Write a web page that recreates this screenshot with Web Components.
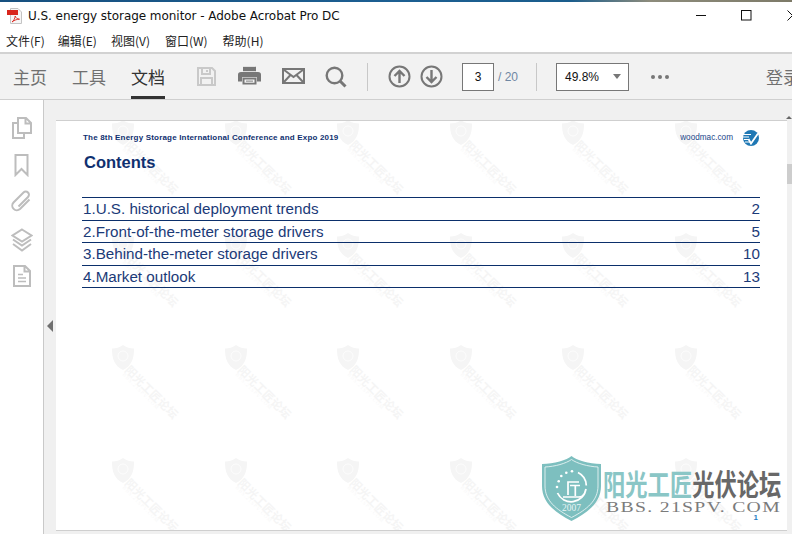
<!DOCTYPE html>
<html>
<head>
<meta charset="utf-8">
<title>U.S. energy storage monitor</title>
<style>
  html, body { margin: 0; height: 100%; overflow: hidden; background: #fff; }
  body { font-family: "Noto Sans", "Noto Sans CJK SC", sans-serif; }
  acro-app { height: 534px; }
</style>
</head>
<body>
<acro-app>
  <title-bar>U.S. energy storage monitor - Adobe Acrobat Pro DC</title-bar>
  <menu-bar></menu-bar>
  <tool-bar></tool-bar>
  <doc-view>
    <side-rail slot="rail"></side-rail>
    <pdf-page>
      <span slot="conf">The 8th Energy Storage International Conference and Expo 2019</span>
      <span slot="site">woodmac.com</span>
      <span slot="heading">Contents</span>
      <toc-row page="2">1.U.S. historical deployment trends</toc-row>
      <toc-row page="5">2.Front-of-the-meter storage drivers</toc-row>
      <toc-row page="10">3.Behind-the-meter storage drivers</toc-row>
      <toc-row page="13">4.Market outlook</toc-row>
    </pdf-page>
  </doc-view>
</acro-app>

<script>
const CJK = '"Noto Sans CJK SC", "Noto Sans", sans-serif';

class AcroApp extends HTMLElement {
  constructor() {
    super();
    this.attachShadow({ mode: 'open' }).innerHTML = `
      <style>
        :host { display: flex; flex-direction: column; width: 792px; overflow: hidden; }
        .strip { height: 2px; background: linear-gradient(90deg, #17507f 0, #1c5f92 50%, #1a5d8c 72%, #8d8c7c 82%, #7d7a68 100%); flex: none; }
      </style>
      <div class="strip"></div>
      <slot></slot>`;
  }
}

class TitleBar extends HTMLElement {
  constructor() {
    super();
    this.attachShadow({ mode: 'open' }).innerHTML = `
      <style>
        :host { display: flex; align-items: center; box-sizing: border-box; height: 25px; flex: none; padding: 2px 0 0 7px; background: #fff; color: #111; font: 12px "DejaVu Sans", sans-serif; }
        .doc { margin-right: 6px; flex: none; }
        .name { flex: 1; white-space: nowrap; letter-spacing: -.05px; }
        .btns { display: flex; align-items: center; width: 103px; flex: none; height: 100%; overflow: hidden; }
        .btns svg { flex: none; display: block; }
      </style>
      <svg class="doc" width="15" height="16" viewBox="0 0 15 16">
        <path d="M3.500.5H11L14.500 4v11.500h-11z" fill="#f6f6f6" stroke="#c4c4c4"/>
        <rect x="0" y="2" width="11" height="5" fill="#d9251c"/>
        <path d="M5 14c1.500-1 3-3.500 3.200-6 .6 2 2 3 4.300 3.200-2.300 0-5 .8-7.500 2.800z" fill="none" stroke="#d9251c" stroke-width=".9"/>
      </svg>
      <span class="name"><slot></slot></span>
      <div class="btns">
        <svg width="11" height="11" viewBox="0 0 11 11" style="margin-left:7px"><path d="M0 5.500h10" stroke="#111"/></svg>
        <svg width="11" height="11" viewBox="0 0 11 11" style="margin-left:34px"><rect x=".5" y=".5" width="9.500" height="9.500" fill="none" stroke="#111"/></svg>
        <svg width="11" height="11" viewBox="0 0 11 11" style="margin-left:35px"><path d="M.5.5l10 10M10.500.5l-10 10" stroke="#111" fill="none"/></svg>
      </div>`;
  }
}

class MenuBar extends HTMLElement {
  constructor() {
    super();
    const items = [['文件(F)', 0], ['编辑(E)', 13], ['视图(V)', 14], ['窗口(W)', 15], ['帮助(H)', 15]];
    const spans = items.map((it) => `<span style="margin-left:${it[1]}px">${it[0]}</span>`).join('');
    this.attachShadow({ mode: 'open' }).innerHTML = `
      <style>
        :host { display: flex; align-items: center; box-sizing: border-box; height: 25px; flex: none; padding: 2px 0 0 6px; background: #fff; color: #222; font: 12px ${CJK}; }
        span { white-space: nowrap; }
      </style>
      ${spans}`;
  }
}

class ToolBar extends HTMLElement {
  constructor() {
    super();
    this.attachShadow({ mode: 'open' }).innerHTML = `
      <style>
        :host { display: flex; align-items: center; height: 45px; flex: none; background: #f2f2f2; border-top: 2px solid #d2d2d2; border-bottom: 1px solid #cfcfcf; font-family: ${CJK}; color: #707070; overflow: hidden; }
        .tab { position: relative; font-size: 17px; line-height: 45px; height: 45px; width: 34px; flex: none; white-space: nowrap; }
        .tab.on { color: #333; }
        .tab.on::after { content: ""; position: absolute; left: 0; right: 0; bottom: 0; height: 3px; background: #333; }
        svg { display: block; flex: none; }
        .sep { width: 1px; height: 28px; background: #c8c8c8; flex: none; }
        .box { box-sizing: border-box; height: 28px; border: 1px solid #777; background: #fff; color: #111; font: 12px "Liberation Sans", sans-serif; display: flex; align-items: center; flex: none; }
        .page { width: 32px; justify-content: center; }
        .count { margin-left: 4px; font: 12px "Liberation Sans", sans-serif; color: #6f87a3; white-space: nowrap; width: 21px; flex: none; }
        .zoom { width: 73px; padding-left: 8px; justify-content: space-between; padding-right: 7px; }
        .zoom i { width: 0; height: 0; border: 4px solid transparent; border-top: 5px solid #777; border-bottom: 0; }
        .dot { width: 4px; height: 4px; border-radius: 50%; background: #777; margin-right: 3px; flex: none; }
        .login { margin-left: 94px; font-size: 17px; white-space: nowrap; flex: none; }
      </style>
      <span class="tab" style="margin-left:13px">主页</span>
      <span class="tab" style="margin-left:25px">工具</span>
      <span class="tab on" style="margin-left:25px">文档</span>
      <svg style="margin-left:31px" width="21" height="21" viewBox="0 0 21 21" fill="none" stroke="#c9c9c9" stroke-width="2">
        <path d="M2 2h14l3 3v14H2z"/><path d="M6 2v6h8V2M11 4v2M5 19v-7h11v7"/>
      </svg>
      <svg style="margin:0 0 3px 21px" width="23" height="19" viewBox="0 0 23 22" preserveAspectRatio="none" fill="#777">
        <path d="M5 1h13v5H5z"/><path d="M3 7h17a3 3 0 0 1 3 3v8h-4v-5H4v5H0v-8a3 3 0 0 1 3-3z"/>
        <path d="M5.500 14.500h12v6h-12z" fill="#f2f2f2" stroke="#777" stroke-width="2"/><path d="M8 17.500h7" stroke="#777"/>
      </svg>
      <svg style="margin:0 0 1px 21px" width="23" height="16" viewBox="0 0 23 16" fill="none" stroke="#777" stroke-width="2">
        <rect x="1" y="1" width="21" height="14"/><path d="M1.500 1.500L11.500 9l10-7.500M1.500 14.500L8.500 7M21.500 14.500L14.500 7"/>
      </svg>
      <svg style="margin-left:20px" width="22" height="22" viewBox="0 0 22 22" fill="none" stroke="#777">
        <circle cx="9.500" cy="9.500" r="7.800" stroke-width="2.400"/><path d="M15 15l5.500 5.500" stroke-width="3"/>
      </svg>
      <div class="sep" style="margin-left:20px"></div>
      <svg style="margin-left:20px" width="23" height="23" viewBox="0 0 23 23" fill="none" stroke="#777" stroke-width="2">
        <circle cx="11.500" cy="11.500" r="10"/><path d="M11.500 18V6M6.500 11l5-5 5 5" stroke-width="2.400"/>
      </svg>
      <svg style="margin-left:9px" width="23" height="23" viewBox="0 0 23 23" fill="none" stroke="#777" stroke-width="2">
        <circle cx="11.500" cy="11.500" r="10"/><path d="M11.500 5v12M6.500 12l5 5 5-5" stroke-width="2.400"/>
      </svg>
      <div class="box page" style="margin-left:19px">3</div>
      <span class="count">/ 20</span>
      <div class="sep" style="margin-left:17px"></div>
      <div class="box zoom" style="margin-left:19px"><span>49.8%</span><i></i></div>
      <span class="dot" style="margin-left:22px"></span><span class="dot"></span><span class="dot"></span>
      <span class="login">登录</span>`;
  }
}

class DocView extends HTMLElement {
  constructor() {
    super();
    this.attachShadow({ mode: 'open' }).innerHTML = `
      <style>
        :host { display: flex; flex: 1; min-height: 0; background: #f0f0f0; position: relative; }
        .main { flex: 1; display: flex; padding: 20px 0 3px 12px; min-width: 0; }
        .bar { width: 5px; flex: none; position: relative; }
        .thumb { position: absolute; top: 64px; left: 0; right: 0; height: 20px; background: #cdcdcd; }
        .up { position: absolute; top: 16px; right: 0; width: 0; height: 0; border: 3px solid transparent; border-bottom: 3px solid #666; border-top: 0; }
        .handle { position: absolute; left: 47px; top: 220px; width: 0; height: 0; border: 6px solid transparent; border-right: 6px solid #707070; border-left: 0; }
      </style>
      <slot name="rail"></slot>
      <div class="main"><slot></slot></div>
      <div class="bar"><div class="up"></div><div class="thumb"></div></div>
      <div class="handle"></div>`;
  }
}

class SideRail extends HTMLElement {
  constructor() {
    super();
    this.attachShadow({ mode: 'open' }).innerHTML = `
      <style>
        :host { display: flex; flex-direction: column; align-items: center; box-sizing: border-box; width: 44px; flex: none; background: #fff; border-right: 1px solid #c9c9c9; padding-top: 17px; }
        svg { display: block; flex: none; }
      </style>
      <svg width="20" height="22" viewBox="0 0 20 22" fill="none" stroke="#bdbdbd" stroke-width="2" style="margin-left:1px">
        <path d="M6 16V1h8l5 5v10zM13.500 1v5.500H19"/><path d="M6 6H1v15h11v-5"/>
      </svg>
      <svg style="margin-top:15px" width="15" height="23" viewBox="0 0 15 23" fill="none" stroke="#bdbdbd" stroke-width="2">
        <path d="M1.500 1h12v20l-6-6-6 6z"/>
      </svg>
      <svg style="margin-top:13px" width="21" height="22" viewBox="0 0 21 22" fill="none" stroke="#bdbdbd" stroke-width="2">
        <path d="M18.500 9.500L9 19a4.600 4.600 0 0 1-6.500-6.500L12.500 2.500a3.100 3.100 0 0 1 4.500 4.500L7.500 16.500"/>
      </svg>
      <svg style="margin-top:16px" width="22" height="24" viewBox="0 0 22 24" fill="none" stroke="#bdbdbd" stroke-width="2">
        <path d="M11 1.500l9.500 6-9.500 6-9.500-6z"/><path d="M2 11.500l9 6 9-6M2 16l9 6.500 9-6.500"/>
      </svg>
      <svg style="margin-top:13px" width="18" height="22" viewBox="0 0 18 22" fill="none" stroke="#bdbdbd" stroke-width="2">
        <path d="M1 1h11l5 5v15H1zM11.500 1v5.500H17"/><path d="M5 9.500h5M5 13h8M5 16.500h8" stroke-width="1.500"/>
      </svg>`;
  }
}

class WmTile extends HTMLElement {
  constructor() {
    super();
    this.attachShadow({ mode: 'open' }).innerHTML = `
      <style>
        :host { display: block; position: relative; width: 0; height: 0; }
        svg { position: absolute; left: 0; top: 0; }
        .t { position: absolute; left: 20px; top: 18px; white-space: nowrap; transform-origin: 0 0; transform: rotate(45deg); font: 700 11.500px/12px ${CJK}; color: #f5f5f5; }
        .u { position: absolute; left: 13px; top: 27px; white-space: nowrap; transform-origin: 0 0; transform: rotate(45deg); font: 5px/6px "Liberation Serif", serif; color: #f7f7f7; letter-spacing: 1px; }
      </style>
      <svg width="22" height="25" viewBox="0 0 22 25">
        <path d="M11 0C8 2.500 4 3.500 0 3.500c0 10 2 17 11 21.500 9-4.500 11-11.500 11-21.500C18 3.500 14 2.500 11 0z" fill="#f5f5f5"/>
        <circle cx="11" cy="11" r="5" fill="none" stroke="#fdfdfd" stroke-width="1"/>
      </svg>
      <span class="t">阳光工匠论坛</span>
      <span class="u">BBS.21SPV.COM</span>`;
  }
}

class SunLogo extends HTMLElement {
  constructor() {
    super();
    this.attachShadow({ mode: 'open' }).innerHTML = `
      <style>
        :host { display: flex; align-items: flex-start; position: absolute; left: 486px; top: 335px; width: 240px; height: 66px; }
        svg { display: block; flex: none; }
        .txt { margin-left: 2px; position: relative; flex: 1; }
        .cn { position: absolute; left: 0; top: 6px; display: flex; font: 700 22.300px/32px ${CJK}; white-space: nowrap; transform-origin: 0 0; transform: scaleY(1.3); }
        .a { color: #8ac6c6; }
        .b { color: #686868; }
        .en { position: absolute; left: 3px; top: 43px; font: 15.500px/16px "Liberation Serif", serif; color: #7b7b7b; letter-spacing: 1.050px; white-space: pre; transform-origin: 0 0; transform: scaleX(1.27); }
      </style>
      <svg width="59" height="65" viewBox="0 0 59 65">
        <path d="M29.500 0C25 4 12 8 0 8v22c0 16 12 26 29.500 35C47 56 59 46 59 30V8C47 8 34 4 29.500 0z" fill="#7dbfbf"/>
        <path d="M29.500 3.500C24 7.500 13 10.500 3 11v19c0 14.500 11 23.500 26.500 31.500C45 53.500 56 44.500 56 30V11c-10-.5-21-3.500-26.500-7.500z" fill="none" stroke="#e6f3f3" stroke-width=".9"/>
        <path d="M36 16.500a15 15 0 0 1 8.300 13M15.500 37a15 15 0 0 0 28.500-4" fill="none" stroke="#fff" stroke-width="1.800"/>
        <path d="M26 39V26h11M28 29.500h10M33.300 29.500V40M21 41h15.500c3 0 5-1 5.500-3" fill="none" stroke="#fff" stroke-width="1.700"/>
        <g fill="#fff"><circle cx="15" cy="31" r="1.300"/><circle cx="16.700" cy="25.300" r="1.300"/><circle cx="19.300" cy="20" r="1.300"/><circle cx="24.300" cy="16.700" r="1.300"/><circle cx="30" cy="15.300" r="1.300"/></g>
        <text x="29.500" y="55" text-anchor="middle" font-family="Liberation Serif, serif" font-size="9.500" fill="#e8f5f5">2007</text>
      </svg>
      <div class="txt">
        <div class="cn"><span class="a">阳光工匠</span><span class="b">光伏论坛</span></div>
        <div class="en">BBS. 21SPV. COM</div>
      </div>`;
  }
}

class PdfPage extends HTMLElement {
  constructor() {
    super();
    let tiles = '';
    for (let r = 0; r < 4; r++) {
      for (let c = 0; c < 6; c++) {
        tiles += `<wm-tile style="position:absolute;left:${56 + c * 112.5}px;top:${-1 + r * 112.5}px"></wm-tile>`;
      }
    }
    this.attachShadow({ mode: 'open' }).innerHTML = `
      <style>
        :host { display: block; position: relative; box-sizing: border-box; flex: 1; background: #fff; border-top: 1px solid #cfcfcf; border-bottom: 1px solid #cfcfcf; padding: 10px 27px 0 27px; overflow: hidden; color: #10357a; font-family: "Liberation Sans", sans-serif; }
        .wm { position: absolute; inset: 0; }
        .content { position: relative; }
        .head { display: flex; align-items: center; height: 13px; }
        .conf { flex: 1; font: 700 8px "Liberation Sans", sans-serif; color: #0f3070; letter-spacing: .18px; }
        .site { font-size: 8.200px; color: #22468a; margin-right: 10px; }
        .globe { display: block; margin-right: 1px; }
        h1 { margin: 8px 0 0 1px; font-size: 16.500px; line-height: 20px; font-weight: 700; color: #0f3070; }
        .toc { margin-top: 25px; border-top: 1px solid #0b2f6b; margin-left: -1px; }
        .num { position: absolute; right: 29px; bottom: 8px; font: 700 8px "Liberation Sans", sans-serif; color: #1f7fc4; }
      </style>
      <div class="wm">${tiles}</div>
      <div class="content">
        <div class="head">
          <span class="conf"><slot name="conf"></slot></span>
          <span class="site"><slot name="site"></slot></span>
          <svg class="globe" width="16" height="16" viewBox="0 0 16 16">
            <circle cx="8" cy="8" r="8" fill="#1f78b4"/>
            <path d="M0 4.500h8M0 7h6M1 9.500h5M2 12h5.500" stroke="#fff" fill="none"/>
            <path d="M5.500 9l2.500 4.500L15 3.500" fill="none" stroke="#fff" stroke-width="1.800"/>
          </svg>
        </div>
        <h1><slot name="heading"></slot></h1>
        <div class="toc"><slot></slot></div>
      </div>
      <sun-logo></sun-logo>
      <span class="num">1</span>`;
  }
}

class TocRow extends HTMLElement {
  constructor() {
    super();
    this.attachShadow({ mode: 'open' }).innerHTML = `
      <style>
        :host { display: flex; justify-content: space-between; align-items: center; box-sizing: border-box; height: 22.500px; padding-left: 1px; border-bottom: 1px solid #0b2f6b; font: 15.200px "Liberation Sans", sans-serif; color: #1b3a78; white-space: nowrap; }
      </style>
      <span><slot></slot></span>
      <span class="p"></span>`;
  }
  connectedCallback() {
    this.shadowRoot.querySelector('.p').textContent = this.getAttribute('page');
  }
}

customElements.define('acro-app', AcroApp);
customElements.define('title-bar', TitleBar);
customElements.define('menu-bar', MenuBar);
customElements.define('tool-bar', ToolBar);
customElements.define('doc-view', DocView);
customElements.define('side-rail', SideRail);
customElements.define('wm-tile', WmTile);
customElements.define('sun-logo', SunLogo);
customElements.define('pdf-page', PdfPage);
customElements.define('toc-row', TocRow);
</script>
</body>
</html>
